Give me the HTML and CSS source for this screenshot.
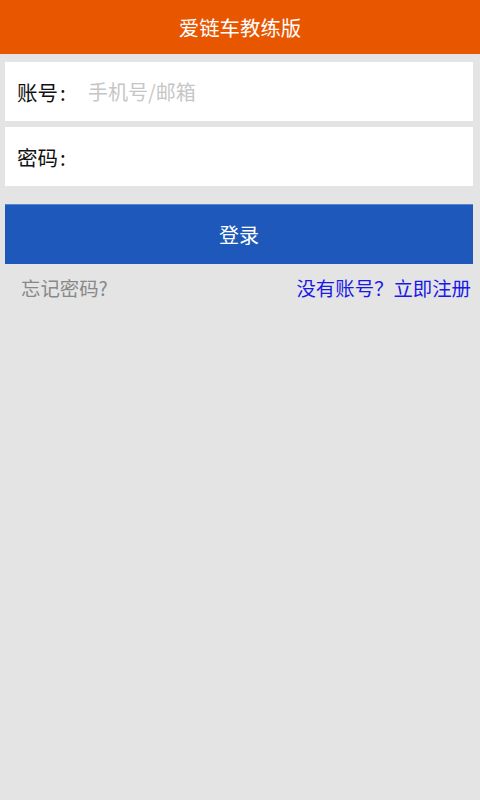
FILE: index.html
```html
<!DOCTYPE html>
<html lang="zh-CN">
<head>
<meta charset="utf-8">
<title>爱链车教练版</title>
<link rel="stylesheet" href="styles.css">
</head>
<body>
<header class="topbar">爱链车教练版</header>
<main class="content">
  <div class="field">
    <span class="label">账号<span class="colon">:</span></span>
    <input class="input" type="text" placeholder="手机号/邮箱">
  </div>
  <div class="field">
    <span class="label">密码<span class="colon">:</span></span>
    <input class="input" type="password">
  </div>
  <button class="login" type="button">登录</button>
  <div class="links">
    <span class="forgot">忘记密码?</span>
    <span class="register">没有账号？立即注册</span>
  </div>
</main>
</body>
</html>
```
FILE: styles.css
```css
html, body {
  margin: 0;
  padding: 0;
  background: #e4e4e4;
  font-family: "Noto Sans CJK SC", "Noto Sans", sans-serif;
}
.topbar {
  height: 54px;
  background: #e85600;
  color: #ffffff;
  font-size: 20.4px;
  line-height: 54px;
  text-align: center;
}
.content {
  padding: 8px 7px 0 5px;
  display: flex;
  flex-direction: column;
}
.field {
  height: 59px;
  background: #ffffff;
  display: flex;
  align-items: center;
  padding-left: 12px;
  margin-bottom: 6px;
}
.field + .field {
  margin-bottom: 0;
}
.label {
  font-size: 20.5px;
  color: #111111;
  width: 71px;
  flex: none;
}
.colon {
  margin-left: 2px;
}
.input {
  flex: 1;
  border: none;
  outline: none;
  background: transparent;
  font-family: inherit;
  font-size: 20px;
  color: #111111;
  padding: 0;
}
.input::placeholder {
  color: #c6c6c6;
}
.login {
  margin-top: 18px;
  height: 60px;
  border: none;
  border-top: 1px solid #5a84cf;
  background: #1e58bb;
  color: #ffffff;
  font-family: inherit;
  font-size: 20px;
  padding: 0;
}
.links {
  display: flex;
  justify-content: space-between;
  padding: 12px 2px 0 16px;
  font-size: 19.4px;
  line-height: 24px;
}
.forgot {
  color: #888888;
}
.register {
  color: #1a1ae6;
}
```
